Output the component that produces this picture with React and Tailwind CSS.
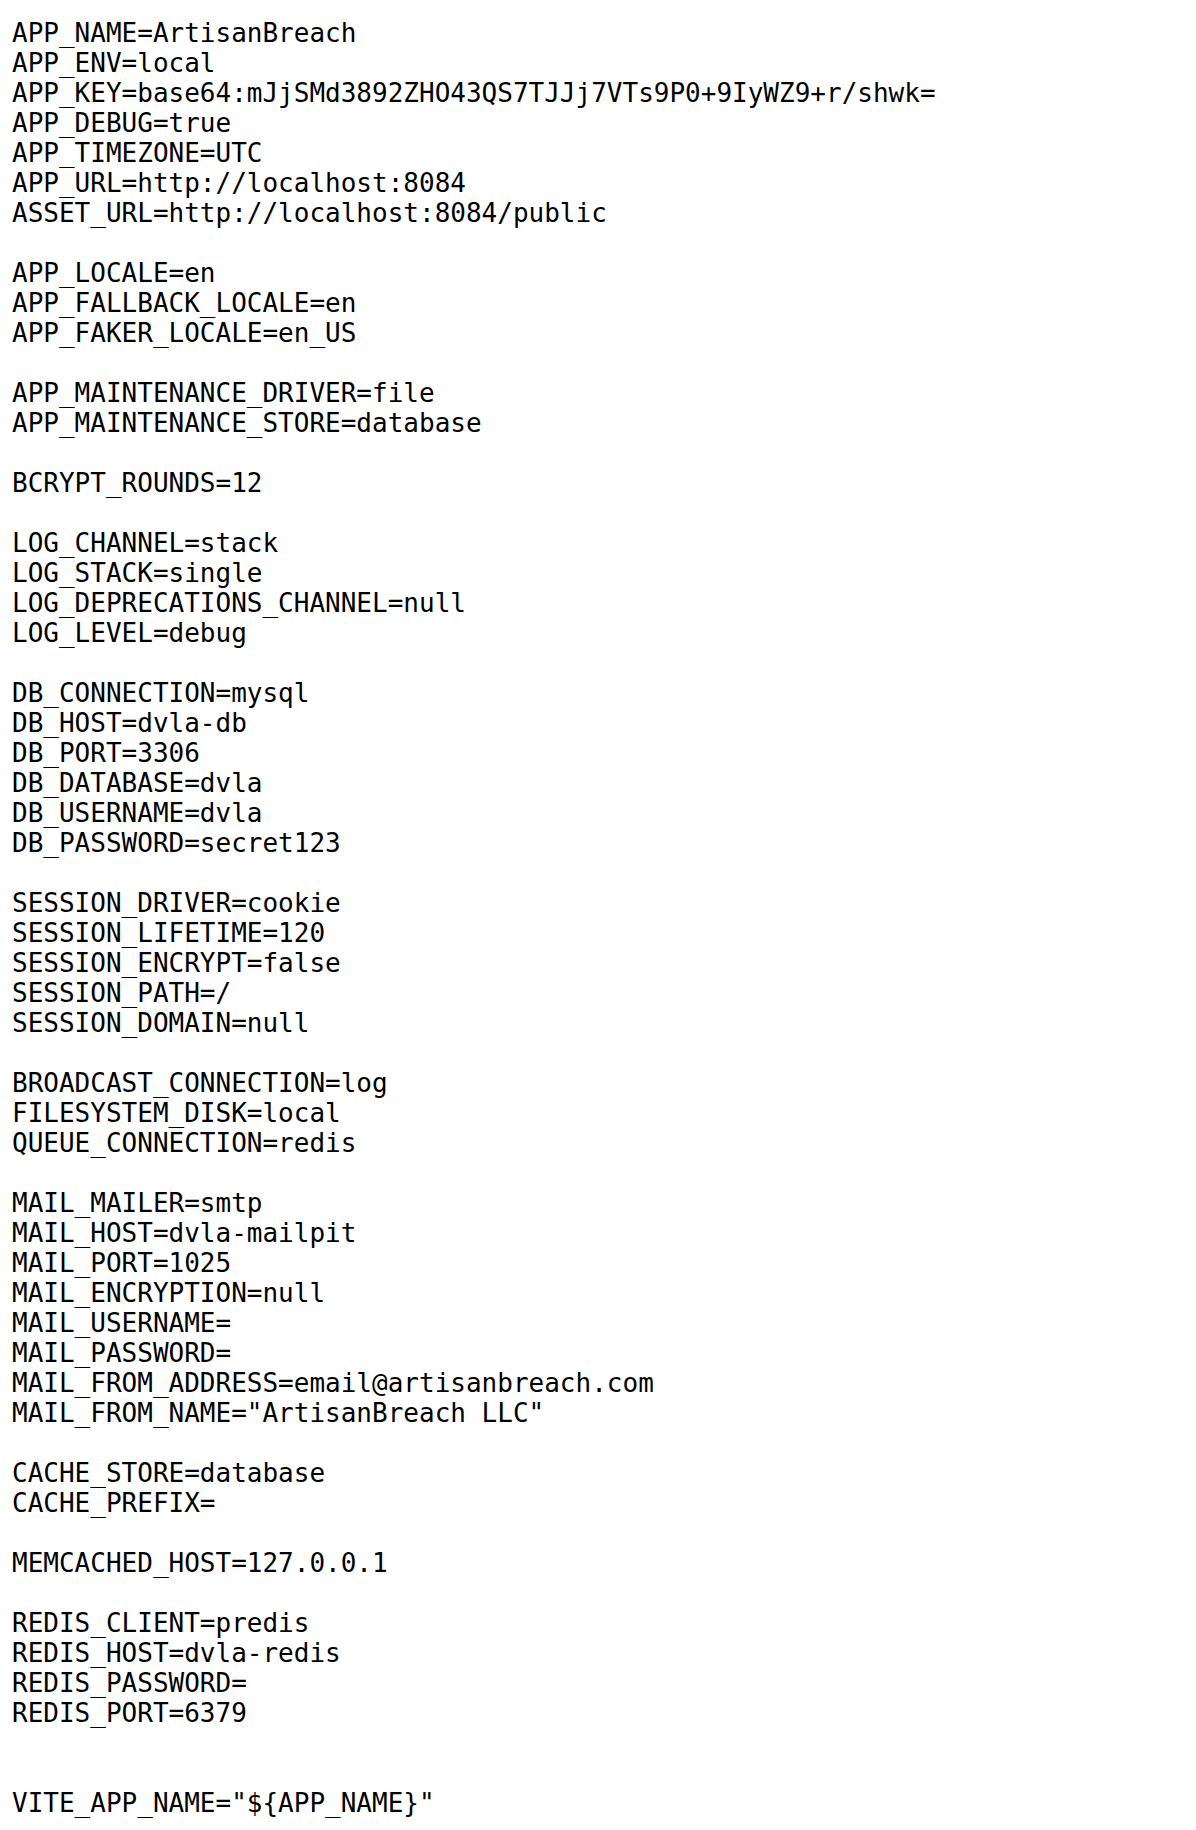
const text = `APP_NAME=ArtisanBreach
APP_ENV=local
APP_KEY=base64:mJjSMd3892ZHO43QS7TJJj7VTs9P0+9IyWZ9+r/shwk=
APP_DEBUG=true
APP_TIMEZONE=UTC
APP_URL=http://localhost:8084
ASSET_URL=http://localhost:8084/public

APP_LOCALE=en
APP_FALLBACK_LOCALE=en
APP_FAKER_LOCALE=en_US

APP_MAINTENANCE_DRIVER=file
APP_MAINTENANCE_STORE=database

BCRYPT_ROUNDS=12

LOG_CHANNEL=stack
LOG_STACK=single
LOG_DEPRECATIONS_CHANNEL=null
LOG_LEVEL=debug

DB_CONNECTION=mysql
DB_HOST=dvla-db
DB_PORT=3306
DB_DATABASE=dvla
DB_USERNAME=dvla
DB_PASSWORD=secret123

SESSION_DRIVER=cookie
SESSION_LIFETIME=120
SESSION_ENCRYPT=false
SESSION_PATH=/
SESSION_DOMAIN=null

BROADCAST_CONNECTION=log
FILESYSTEM_DISK=local
QUEUE_CONNECTION=redis

MAIL_MAILER=smtp
MAIL_HOST=dvla-mailpit
MAIL_PORT=1025
MAIL_ENCRYPTION=null
MAIL_USERNAME=
MAIL_PASSWORD=
MAIL_FROM_ADDRESS=email@artisanbreach.com
MAIL_FROM_NAME="ArtisanBreach LLC"

CACHE_STORE=database
CACHE_PREFIX=

MEMCACHED_HOST=127.0.0.1

REDIS_CLIENT=predis
REDIS_HOST=dvla-redis
REDIS_PASSWORD=
REDIS_PORT=6379


VITE_APP_NAME="\${APP_NAME}"`;

export default function App() {
  return (
    <div className="min-h-[1830px] w-full bg-white">
      <pre className="m-0 pl-[12px] pt-[18px] font-['DejaVu_Sans_Mono',monospace] text-[26px] leading-[30px] text-black whitespace-pre-wrap break-words">
        {text}
      </pre>
    </div>
  );
}
